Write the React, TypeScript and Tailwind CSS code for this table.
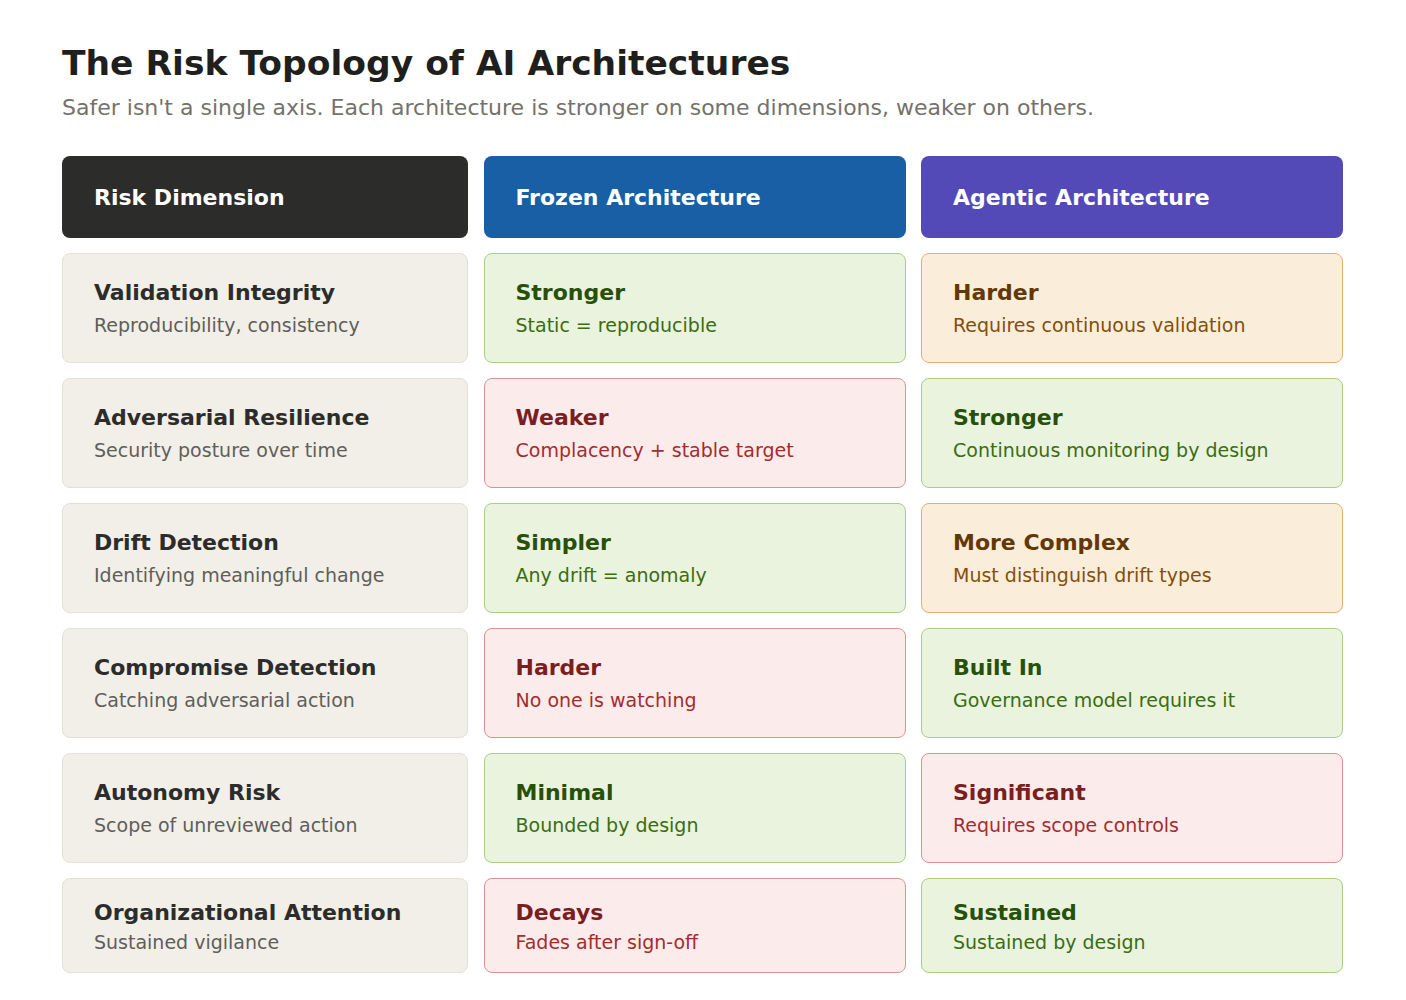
const FONT = { fontFamily: '"DejaVu Sans", Verdana, sans-serif' };

type Tone = "neutral" | "green" | "red" | "amber";

const tones: Record<Tone, { box: string; title: string; sub: string }> = {
  neutral: {
    box: "bg-[#f1efe8] border-[#e3e0d8]",
    title: "text-[#2c2c2a]",
    sub: "text-[#5f5e5a]",
  },
  green: {
    box: "bg-[#eaf3de] border-[#a9cf86]",
    title: "text-[#27500a]",
    sub: "text-[#3b6d11]",
  },
  red: {
    box: "bg-[#fcebeb] border-[#d99393]",
    title: "text-[#791f1f]",
    sub: "text-[#a32d2d]",
  },
  amber: {
    box: "bg-[#faeeda] border-[#e2b073]",
    title: "text-[#633806]",
    sub: "text-[#854f0b]",
  },
};

type Cell = { title: string; sub: string; tone: Tone };

const rows: Cell[][] = [
  [
    { title: "Validation Integrity", sub: "Reproducibility, consistency", tone: "neutral" },
    { title: "Stronger", sub: "Static = reproducible", tone: "green" },
    { title: "Harder", sub: "Requires continuous validation", tone: "amber" },
  ],
  [
    { title: "Adversarial Resilience", sub: "Security posture over time", tone: "neutral" },
    { title: "Weaker", sub: "Complacency + stable target", tone: "red" },
    { title: "Stronger", sub: "Continuous monitoring by design", tone: "green" },
  ],
  [
    { title: "Drift Detection", sub: "Identifying meaningful change", tone: "neutral" },
    { title: "Simpler", sub: "Any drift = anomaly", tone: "green" },
    { title: "More Complex", sub: "Must distinguish drift types", tone: "amber" },
  ],
  [
    { title: "Compromise Detection", sub: "Catching adversarial action", tone: "neutral" },
    { title: "Harder", sub: "No one is watching", tone: "red" },
    { title: "Built In", sub: "Governance model requires it", tone: "green" },
  ],
  [
    { title: "Autonomy Risk", sub: "Scope of unreviewed action", tone: "neutral" },
    { title: "Minimal", sub: "Bounded by design", tone: "green" },
    { title: "Significant", sub: "Requires scope controls", tone: "red" },
  ],
  [
    { title: "Organizational Attention", sub: "Sustained vigilance", tone: "neutral" },
    { title: "Decays", sub: "Fades after sign-off", tone: "red" },
    { title: "Sustained", sub: "Sustained by design", tone: "green" },
  ],
];

const headers = [
  { label: "Risk Dimension", bg: "bg-[#2c2c2a]" },
  { label: "Frozen Architecture", bg: "bg-[#185fa5]" },
  { label: "Agentic Architecture", bg: "bg-[#534ab7]" },
];

function CellBox({ cell, last }: { cell: Cell; last: boolean }) {
  const t = tones[cell.tone];
  return (
    <div
      className={`flex flex-col justify-center rounded-lg border px-[31px] ${t.box} ${
        last ? "h-[95px] pt-[3px]" : "h-[110px] pt-[1px]"
      }`}
    >
      <div className={`text-[22px] font-bold leading-[28px] ${t.title}`}>{cell.title}</div>
      <div className={`text-[19px] leading-[26px] ${last ? "mt-[2px]" : "mt-[5px]"} ${t.sub}`}>
        {cell.sub}
      </div>
    </div>
  );
}

export default function App() {
  return (
    <div className="min-h-screen bg-white px-[62px] pt-[40px]" style={FONT}>
      <h1 className="text-[34.5px] font-bold leading-[46px] text-[#1f1f1d]">
        The Risk Topology of AI Architectures
      </h1>
      <p className="mt-[7px] text-[22px] leading-[30px] text-[#73726c]">
        Safer isn't a single axis. Each architecture is stronger on some dimensions, weaker on others.
      </p>

      <div className="mt-[33px] grid grid-cols-[406px_422px_422px] gap-x-[15.5px] gap-y-[15px]">
        {headers.map((h) => (
          <div
            key={h.label}
            className={`flex h-[82px] items-center rounded-lg px-[32px] text-[22px] font-bold text-white ${h.bg}`}
          >
            {h.label}
          </div>
        ))}
        {rows.map((row, i) =>
          row.map((cell, j) => (
            <CellBox key={`${i}-${j}`} cell={cell} last={i === rows.length - 1} />
          ))
        )}
      </div>
    </div>
  );
}
